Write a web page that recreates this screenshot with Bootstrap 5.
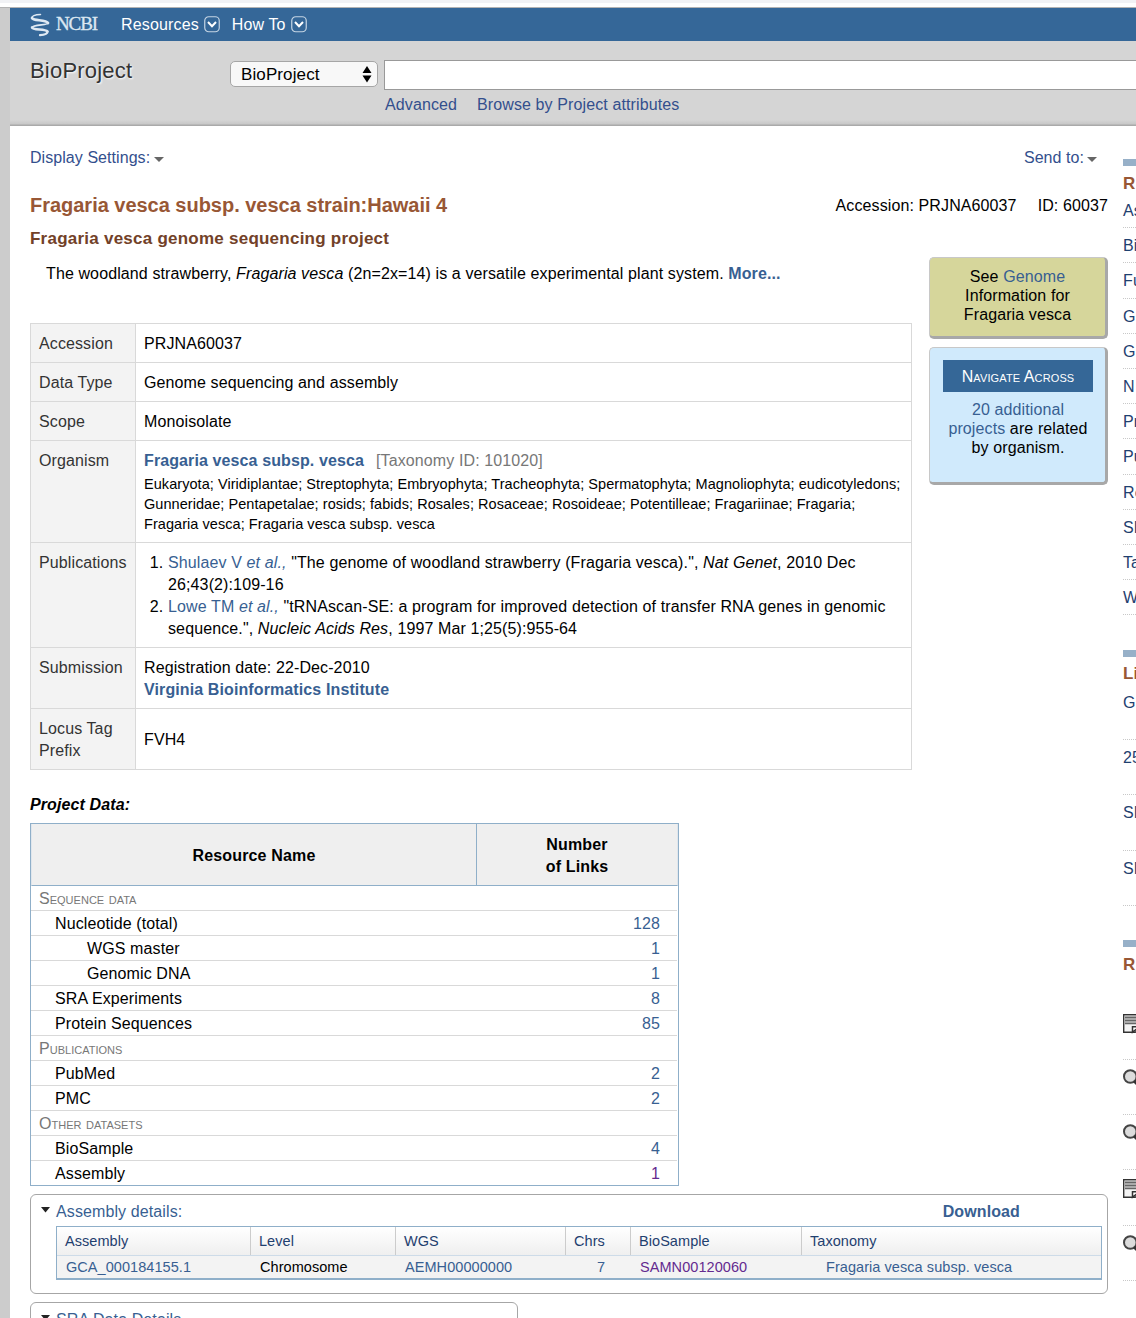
<!DOCTYPE html>
<html lang="en">
<head>
<meta charset="utf-8">
<title>Fragaria vesca subsp. vesca - BioProject - NCBI</title>
<link href="https://cdn.jsdelivr.net/npm/bootstrap@5.3.0/dist/css/bootstrap.min.css" rel="stylesheet">
<style>
html{overflow:hidden}
body{font:16px/22px "Liberation Sans",Arial,sans-serif;letter-spacing:.11px;color:#000;background:#fff;width:1136px;height:1318px;overflow:hidden}
a{color:#385f92;text-decoration:none}
svg{display:block;flex:none}
.strip{height:8px;background:#fff;border-top:3px solid #f1f2f5;border-bottom:1px solid #b3b3b3}
.page{border-left:10px solid #ccc;height:1310px;overflow:hidden}
.topnav{height:33px;background:#356798;color:#fff;padding-left:20px}
.brandname{font:19px/24px "Liberation Serif",serif;color:#dce7f2;letter-spacing:-1.1px;-webkit-text-stroke:.3px #dce7f2;width:43px;margin-left:6px;margin-top:-2px}
.navres{margin-left:22px;margin-right:5px;letter-spacing:.15px}
.navhow{margin-left:12px;margin-right:5px}
.searchbar{height:85px;background:linear-gradient(#d5d5d5 79px,#c8c8c8 83px,#aaa 84px);padding-left:20px}
.dbtitle{font-size:22px;line-height:28px;width:200px;color:#333;padding-top:16px;text-shadow:1px 1px 2px #fff;letter-spacing:.2px}
.dbselect{width:148px;height:26px;background:#f8f8f8;border:1px solid #a6a6a6;border-radius:5px;margin-top:20px;padding:0 5px 0 10px;font-size:17px}
.dbselect span{padding-top:1px}
.querycol{margin-left:6px}
.query{width:760px;height:30px;background:#fff;border:1px solid #999;margin-top:19px}
.blue2{color:#334f8d}
.maincol{width:1078px;margin-left:20px}
.side{margin-left:15px;width:200px;padding-top:33px;color:#1f406f}
.settings{height:22px;margin-top:21px;padding-right:11px;letter-spacing:.06px}
h1{font-size:20px;line-height:24px;font-weight:700;color:#985735;margin:0;letter-spacing:-.02px}
h2{font-size:17px;line-height:22px;font-weight:700;color:#724128;margin:11px 0 0;letter-spacing:.24px}
.intro{margin:13px 0 0 16px}
.details{width:882px;margin-top:38px;border-collapse:collapse}
.details th,.details td{border:1px solid #d9d9d9;padding:9px 8px 7px;vertical-align:top}
.details th{width:105px;background:#f3f3f3;font-weight:400;color:#333}
.lineage{font-size:14.5px;line-height:20px;margin-top:2px;padding-bottom:1px;letter-spacing:.055px}
.details ol{padding-left:24px;margin:0;letter-spacing:.12px}
.panels{width:179px;margin-top:7px}
.pane{border:1px solid #c8c8c8;border-right:3px solid #a8a8a8;border-bottom:3px solid #a8a8a8;border-radius:5px;text-align:center;line-height:19px}
.genomepane{height:82px;background:#d6d69b;padding-top:9px}
.navpane{height:138px;margin-top:8px;background:#d0eafc;padding:12px 12px 0 13px}
.smallcap{font-variant:small-caps}
.navlabel{background:#356797;color:#fff;height:32px;line-height:34px;margin-bottom:8px}
.resources{width:649px;border:1px solid #8fafc9;margin-top:7px}
.reshead{height:62px;background:#efefef;border:1px solid #e0e6ec;border-top:0;border-bottom:1px solid #8fafc9;font-weight:700;text-align:center;letter-spacing:.15px}
.reshead>div{padding-top:2px}
.reshead>div:first-child{width:445px;border-right:1px solid #8fafc9}
.resrow{height:25px;line-height:24px;border-bottom:1px solid #d9d9d9;padding:1px 17px 0 24px;margin-right:1px}
.resrow:last-child{border:0;height:24px}
.resrow.group{padding-left:8px;color:#777;font-variant:small-caps;letter-spacing:.02px}
.resrow.deep{padding-left:56px}
.visited{color:#642a8f}
.detailbox{border:1px solid #a6a6a6;border-radius:6px;margin-top:8px;padding:6px 5px 0 10px}
.asm{margin:3px 0 0 15px;width:1046px;border:1px solid #8fafc9;border-bottom-width:2px;font-size:14.5px;letter-spacing:.06px}
.asm .hd{height:29px;line-height:28px;background:linear-gradient(#fff,#efefef);border-bottom:1px solid #cddbe8;color:#1f406f}
.asm .bd{height:22px;line-height:22px;background:#f3f3f3}
.asm .hd>div{border-right:1px solid #ccc;padding-left:8px}
.asm .bd>div{padding-left:9px}
.asm .hd>div:last-child{border:0}
.c1{width:194px}.c2{width:145px}.c3{width:170px}.c4{width:65px}.c5{width:171px}.c6{flex:1}
.asm .bd>.c4{padding-left:5px}
.asm .bd>.c6{padding-left:24px}
.sidebar-rule{height:7px;background:#97b0c8}
.sidehead{font-weight:700;color:#985735;font-size:17px;line-height:22px}
.dotrow{background:repeating-linear-gradient(90deg,#c8c8c8 0 1px,transparent 1px 2px) bottom left/100% 1px no-repeat}
.s1{height:35.2px;line-height:35px}
.s2{height:55.1px;padding-top:7px}
.s3{height:55.25px;padding-top:9px}
</style>
<script src="https://cdn.jsdelivr.net/npm/bootstrap@5.3.0/dist/js/bootstrap.bundle.min.js"></script>
</head>
<body>
<svg width="0" height="0" class="position-absolute"><defs>
<g id="drop"><rect x=".75" y=".75" width="14.5" height="15" rx="4" fill="none" stroke="#c5d5e4" stroke-width="1.2"/><path d="M4 6l4 4.200 4-4.200" fill="none" stroke="#fff" stroke-width="2"/></g>
<g id="note"><path d="M.7.7h17.600v12l-6 5.600H.7z" fill="#f4f4f4" stroke="#333" stroke-width="1.400"/><path d="M1.400 1.500h16.400v9H1.400z" fill="#aaa"/><path d="M2 3.500h16M2 6.500h16M2 9.500h16" stroke="#666" stroke-width="1"/><path d="M9.500 18.300v-5.500h7z" fill="#fff" stroke="#333" stroke-width="1.500"/></g>
<g id="lens"><circle cx="7.300" cy="7.500" r="6.300" fill="#dcdcdc" stroke="#444" stroke-width="2"/><path d="M11.500 12l4.500 4.500" stroke="#333" stroke-width="3.500"/></g>
</defs></svg>
<div class="strip"></div>
<div class="page">
  <nav class="topnav d-flex align-items-center">
    <svg width="20" height="24" viewBox="0 0 20 24" fill="none" stroke="#dfe9f3" stroke-linecap="round"><path d="M10.500 1.500C4.500 1.500 1.500 3.500 2 5" stroke-width="1.500"/><path d="M2 5c1 3 14 1.500 16 5" stroke-width="2.700"/><path d="M18 10c0 2.500-15 1-16 4.500" stroke-width="1.700"/><path d="M2 14.500c1 3 13 1 15.500 4" stroke-width="2.500"/><path d="M17.500 18.500c0 2.500-4 3.500-7.500 3.700" stroke-width="2.200"/></svg>
    <span class="brandname">NCBI</span>
    <span class="navres">Resources</span><svg width="16" height="17"><use href="#drop"/></svg>
    <span class="navhow">How To</span><svg width="16" height="17"><use href="#drop"/></svg>
  </nav>
  <header class="searchbar d-flex">
    <div class="dbtitle flex-shrink-0">BioProject</div>
    <div class="dbselect d-flex align-items-center justify-content-between flex-shrink-0"><span>BioProject</span><svg width="10" height="17"><path d="M5 0l4.500 7h-9zM5 16.500L.5 9.500h9z"/></svg></div>
    <div class="querycol flex-shrink-0">
      <div class="query"></div>
      <div class="d-flex pt-1 blue2"><span style="margin-left:1px">Advanced</span><span style="margin-left:20px">Browse by Project attributes</span></div>
    </div>
  </header>
  <div class="d-flex">
    <main class="maincol flex-shrink-0">
      <div class="settings d-flex justify-content-between blue2">
        <div class="d-flex">Display Settings:<svg class="mt-2" style="margin-left:4px" width="10" height="8"><path d="M0 2h10L5 7z" fill="#666"/></svg></div>
        <div class="d-flex">Send to:<svg class="mt-2" style="margin-left:3px" width="10" height="8"><path d="M0 2h10L5 7z" fill="#666"/></svg></div>
      </div>
      <div class="d-flex justify-content-between align-items-center" style="margin-top:24px">
        <h1>Fragaria vesca subsp. vesca strain:Hawaii 4</h1>
        <div style="padding-top:2px"><span>Accession: PRJNA60037</span><span style="margin-left:21px">ID: 60037</span></div>
      </div>
      <h2>Fragaria vesca genome sequencing project</h2>
      <div class="d-flex justify-content-between">
        <div>
          <p class="intro">The woodland strawberry, <i>Fragaria vesca</i> (2n=2x=14) is a versatile experimental plant system. <a href="#" class="fw-bold">More...</a></p>
          <table class="details">
            <tr><th>Accession</th><td>PRJNA60037</td></tr>
            <tr><th>Data Type</th><td>Genome sequencing and assembly</td></tr>
            <tr><th>Scope</th><td>Monoisolate</td></tr>
            <tr><th>Organism</th><td><a href="#" class="fw-bold">Fragaria vesca subsp. vesca</a><span style="color:#777;margin-left:12px">[Taxonomy ID: 101020]</span>
              <div class="lineage">Eukaryota; Viridiplantae; Streptophyta; Embryophyta; Tracheophyta; Spermatophyta; Magnoliophyta; eudicotyledons;<br>Gunneridae; Pentapetalae; rosids; fabids; Rosales; Rosaceae; Rosoideae; Potentilleae; Fragariinae; Fragaria;<br>Fragaria vesca; Fragaria vesca subsp. vesca</div></td></tr>
            <tr><th>Publications</th><td><ol>
              <li><a href="#">Shulaev V <i>et al.,</i></a> "The genome of woodland strawberry (Fragaria vesca).", <i>Nat Genet</i>, 2010 Dec<br>26;43(2):109-16</li>
              <li><a href="#">Lowe TM <i>et al.,</i></a> "tRNAscan-SE: a program for improved detection of transfer RNA genes in genomic<br>sequence.", <i>Nucleic Acids Res</i>, 1997 Mar 1;25(5):955-64</li></ol></td></tr>
            <tr><th>Submission</th><td>Registration date: 22-Dec-2010<br><a href="#" class="fw-bold">Virginia Bioinformatics Institute</a></td></tr>
            <tr><th>Locus Tag<br>Prefix</th><td class="align-middle">FVH4</td></tr>
          </table>
        </div>
        <aside class="panels">
          <div class="pane genomepane">See <a href="#">Genome</a><br>Information for<br>Fragaria vesca</div>
          <div class="pane navpane"><div class="navlabel smallcap">Navigate Across</div><a href="#">20 additional<br>projects</a> are related<br>by organism.</div>
        </aside>
      </div>
      <div class="fw-bold fst-italic" style="margin-top:24px">Project Data:</div>
      <div class="resources">
        <div class="reshead d-flex"><div class="d-flex align-items-center justify-content-center">Resource Name</div><div class="d-flex align-items-center justify-content-center flex-fill">Number<br>of Links</div></div>
        <div class="resrow group">Sequence data</div>
        <div class="resrow d-flex justify-content-between">Nucleotide (total)<a href="#">128</a></div>
        <div class="resrow deep d-flex justify-content-between">WGS master<a href="#">1</a></div>
        <div class="resrow deep d-flex justify-content-between">Genomic DNA<a href="#">1</a></div>
        <div class="resrow d-flex justify-content-between">SRA Experiments<a href="#">8</a></div>
        <div class="resrow d-flex justify-content-between">Protein Sequences<a href="#">85</a></div>
        <div class="resrow group">Publications</div>
        <div class="resrow d-flex justify-content-between">PubMed<a href="#">2</a></div>
        <div class="resrow d-flex justify-content-between">PMC<a href="#">2</a></div>
        <div class="resrow group">Other datasets</div>
        <div class="resrow d-flex justify-content-between">BioSample<a href="#">4</a></div>
        <div class="resrow d-flex justify-content-between">Assembly<a href="#" class="visited">1</a></div>
      </div>
      <section class="detailbox" style="height:100px">
        <div class="d-flex"><svg width="9" height="16"><path d="M0 6h9l-4.500 5.500z" fill="#222"/></svg><a href="#" style="margin-left:6px">Assembly details:</a><a href="#" class="fw-bold ms-auto" style="margin-right:82px">Download</a></div>
        <div class="asm">
          <div class="hd d-flex"><div class="c1">Assembly</div><div class="c2">Level</div><div class="c3">WGS</div><div class="c4">Chrs</div><div class="c5">BioSample</div><div class="c6">Taxonomy</div></div>
          <div class="bd d-flex"><div class="c1"><a href="#">GCA_000184155.1</a></div><div class="c2">Chromosome</div><div class="c3"><a href="#">AEMH00000000</a></div><div class="c4 text-center"><a href="#">7</a></div><div class="c5"><a href="#" class="visited">SAMN00120060</a></div><div class="c6"><a href="#">Fragaria vesca subsp. vesca</a></div></div>
        </div>
      </section>
      <section class="detailbox" style="width:488px;height:60px">
        <div class="d-flex"><svg width="9" height="16"><path d="M0 6h9l-4.500 5.500z" fill="#222"/></svg><a href="#" style="margin-left:6px">SRA Data Details</a></div>
      </section>
    </main>
    <aside class="side flex-shrink-0">
      <div class="sidebar-rule"></div>
      <div class="sidehead" style="margin-top:7px">R</div>
      <div style="margin-top:-2px">
      <div class="dotrow s1">As</div><div class="dotrow s1">Bi</div><div class="dotrow s1">Fu</div><div class="dotrow s1">G</div><div class="dotrow s1">G</div><div class="dotrow s1">N</div><div class="dotrow s1">Pr</div><div class="dotrow s1">Pu</div><div class="dotrow s1">Re</div><div class="dotrow s1">SR</div><div class="dotrow s1">Ta</div><div class="dotrow s1">W</div>
      </div>
      <div class="sidebar-rule" style="margin-top:35px"></div>
      <div class="sidehead" style="margin-top:6px">Li</div>
      <div class="dotrow s2">G</div><div class="dotrow s2">25</div><div class="dotrow s2">SR</div><div class="dotrow s2">SR</div>
      <div class="sidebar-rule" style="margin-top:34px"></div>
      <div class="sidehead" style="margin-top:7px;margin-bottom:29px">R</div>
      <div class="dotrow s3"><svg width="20" height="20"><use href="#note"/></svg></div>
      <div class="dotrow s3"><svg width="18" height="18"><use href="#lens"/></svg></div>
      <div class="dotrow s3"><svg width="18" height="18"><use href="#lens"/></svg></div>
      <div class="dotrow s3"><svg width="20" height="20"><use href="#note"/></svg></div>
      <div class="dotrow s3"><svg width="18" height="18"><use href="#lens"/></svg></div>
    </aside>
  </div>
</div>
</body>
</html>
